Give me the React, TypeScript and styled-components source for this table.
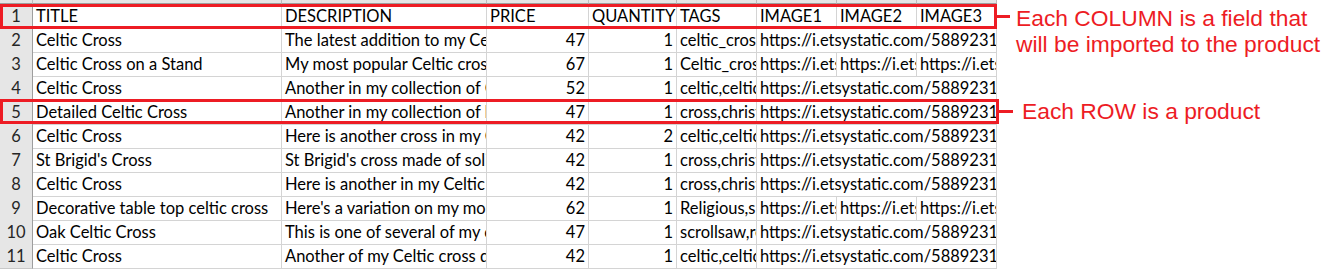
import React from "react";
import styled, { createGlobalStyle } from "styled-components";

const GlobalStyle = createGlobalStyle`
  html, body { margin: 0; padding: 0; background: #ffffff; }
  body { font-family: Lato, "Liberation Sans", sans-serif; }
`;

const COLS = "33px 249px 205px 102px 88px 80px 80px 80px 80px";
const RED = "#ed1c24";

const Page = styled.div`
  position: relative;
  width: 1338px;
  height: 272px;
  overflow: hidden;
  background: #ffffff;
`;

const Sheet = styled.div`
  width: 997px;
  display: flex;
  flex-direction: column;
  font-family: Lato, "Liberation Sans", sans-serif;
  font-size: 16.5px;
  color: #000000;
`;

const HeaderStrip = styled.div`
  display: grid;
  grid-template-columns: ${COLS};
  height: 4px;
`;

const StripCell = styled.div`
  background: #e6e6e6;
  border-right: 1px solid #bdbdbd;
  border-bottom: 1px solid #9e9e9e;
  box-sizing: border-box;
`;

const Row = styled.div`
  display: grid;
  grid-template-columns: ${COLS};
  height: 24px;
`;

const RowHead = styled.div`
  background: #e6e6e6;
  border-right: 1px solid #9e9e9e;
  border-bottom: 1px solid #c8c8c8;
  box-sizing: border-box;
  color: #262626;
  text-align: center;
  line-height: 24px;
`;

const Cell = styled.div<{ $num?: boolean; $span?: number }>`
  grid-column: span ${(p) => p.$span ?? 1};
  border-right: 1px solid #d4d4d4;
  border-bottom: 1px solid #d4d4d4;
  box-sizing: border-box;
  padding: 0 3px 0 3px;
  line-height: 24px;
  white-space: nowrap;
  overflow: hidden;
  text-align: ${(p) => (p.$num ? "right" : "left")};
`;

const Callout = styled.div<{ $top: number }>`
  position: absolute;
  left: 0;
  top: ${(p) => p.$top}px;
  display: flex;
  align-items: flex-start;
`;

const Frame = styled.div<{ $width: number }>`
  flex: none;
  width: ${(p) => p.$width}px;
  height: 25px;
  border: 3px solid ${RED};
  box-sizing: border-box;
`;

const Connector = styled.div<{ $length: number }>`
  flex: none;
  width: ${(p) => p.$length}px;
  height: 3px;
  margin-top: 11px;
  background: ${RED};
`;

const Label = styled.div<{ $gap: number; $shift: number }>`
  margin-left: ${(p) => p.$gap}px;
  margin-top: ${(p) => p.$shift}px;
  font-family: "Liberation Sans", Arial, sans-serif;
  font-size: 22.8px;
  line-height: 25.6px;
  color: ${RED};
  white-space: nowrap;
`;

type Product = {
  title: string;
  desc: string;
  price: string;
  qty: string;
  tags: string;
  images: string[];
};

const URL = "https://i.etsystatic.com/5889231/r/il/8f2c1a/1873459210/il_fullxfull.jpg";

const rows: Product[] = [
  { title: "Celtic Cross", desc: "The latest addition to my Celtic cross collection", price: "47", qty: "1", tags: "celtic_cross,christian,wall_decor", images: [URL] },
  { title: "Celtic Cross on a Stand", desc: "My most popular Celtic cross design, now on a stand", price: "67", qty: "1", tags: "Celtic_cross,stand,wooden", images: [URL, URL, URL] },
  { title: "Celtic Cross", desc: "Another in my collection of Celtic crosses", price: "52", qty: "1", tags: "celtic,celtic_cross,irish", images: [URL] },
  { title: "Detailed Celtic Cross", desc: "Another in my collection of hand cut crosses", price: "47", qty: "1", tags: "cross,christian,celtic", images: [URL] },
  { title: "Celtic Cross", desc: "Here is another cross in my Celtic collection", price: "42", qty: "2", tags: "celtic,celtic_cross,irish", images: [URL] },
  { title: "St Brigid's Cross", desc: "St Brigid's cross made of solid oak", price: "42", qty: "1", tags: "cross,christian,irish", images: [URL] },
  { title: "Celtic Cross", desc: "Here is another in my Celtic cross series", price: "42", qty: "1", tags: "cross,christian,celtic", images: [URL] },
  { title: "Decorative table top celtic cross", desc: "Here's a variation on my most popular cross", price: "62", qty: "1", tags: "Religious,spiritual,cross", images: [URL, URL, URL] },
  { title: "Oak Celtic Cross", desc: "This is one of several of my oak crosses", price: "47", qty: "1", tags: "scrollsaw,religious,oak", images: [URL] },
  { title: "Celtic Cross", desc: "Another of my Celtic cross designs in walnut", price: "42", qty: "1", tags: "celtic,celtic_cross,walnut", images: [URL] },
];

const headers = ["TITLE", "DESCRIPTION", "PRICE", "QUANTITY", "TAGS", "IMAGE1", "IMAGE2", "IMAGE3"];

export default function App() {
  return (
    <>
      <GlobalStyle />
      <Page>
        <Sheet>
          <HeaderStrip>
            {Array.from({ length: 9 }).map((_, i) => (
              <StripCell key={i} />
            ))}
          </HeaderStrip>
          <Row>
            <RowHead>1</RowHead>
            {headers.map((h) => (
              <Cell key={h}>{h}</Cell>
            ))}
          </Row>
          {rows.map((r, i) => (
            <Row key={i}>
              <RowHead>{i + 2}</RowHead>
              <Cell>{r.title}</Cell>
              <Cell>{r.desc}</Cell>
              <Cell $num>{r.price}</Cell>
              <Cell $num>{r.qty}</Cell>
              <Cell>{r.tags}</Cell>
              {r.images.length === 1 ? (
                <Cell $span={3}>{r.images[0]}</Cell>
              ) : (
                r.images.map((u, j) => <Cell key={j}>{u}</Cell>)
              )}
            </Row>
          ))}
        </Sheet>
        <Callout $top={4}>
          <Frame $width={997} />
          <Connector $length={13} />
          <Label $gap={6} $shift={2}>
            Each COLUMN is a field that
            <br />
            will be imported to the product
          </Label>
        </Callout>
        <Callout $top={99}>
          <Frame $width={999} />
          <Connector $length={14} />
          <Label $gap={9} $shift={0}>
            Each ROW is a product
          </Label>
        </Callout>
      </Page>
    </>
  );
}
